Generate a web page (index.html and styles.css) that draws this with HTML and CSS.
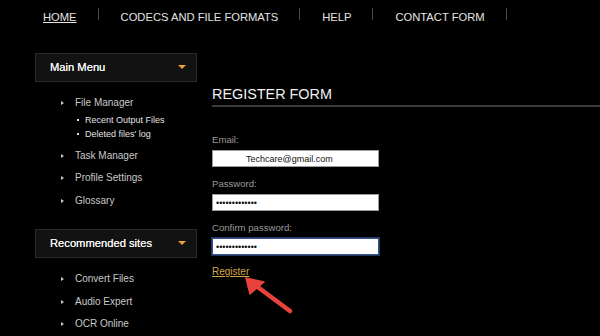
FILE: index.html
```html
<!DOCTYPE html>
<html>
<head>
<meta charset="utf-8">
<link rel="stylesheet" href="styles.css">
</head>
<body>
<header class="topnav">
  <ul class="nav-list">
    <li class="nav-item"><a class="nav-link active" href="#">HOME</a></li>
    <li class="nav-item"><a class="nav-link" href="#">CODECS AND FILE FORMATS</a></li>
    <li class="nav-item"><a class="nav-link" href="#">HELP</a></li>
    <li class="nav-item"><a class="nav-link" href="#">CONTACT FORM</a></li>
  </ul>
</header>
<div class="layout">
  <aside class="sidebar">
    <div class="panel-head"><span class="panel-title">Main Menu</span><span class="caret"></span></div>
    <ul class="menu">
      <li class="menu-item"><span class="menu-text">File Manager</span>
        <ul class="submenu">
          <li class="sub-item">Recent Output Files</li>
          <li class="sub-item">Deleted files' log</li>
        </ul>
      </li>
      <li class="menu-item"><span class="menu-text">Task Manager</span></li>
      <li class="menu-item"><span class="menu-text">Profile Settings</span></li>
      <li class="menu-item"><span class="menu-text">Glossary</span></li>
    </ul>
    <div class="panel-head"><span class="panel-title">Recommended sites</span><span class="caret"></span></div>
    <ul class="menu">
      <li class="menu-item"><span class="menu-text">Convert Files</span></li>
      <li class="menu-item"><span class="menu-text">Audio Expert</span></li>
      <li class="menu-item"><span class="menu-text">OCR Online</span></li>
    </ul>
  </aside>
  <main class="content">
    <h1 class="page-title">REGISTER FORM</h1>
    <form class="reg-form">
      <div class="field">
        <label class="field-label">Email:</label>
        <input class="field-input email-input" type="text" value="Techcare@gmail.com">
      </div>
      <div class="field">
        <label class="field-label">Password:</label>
        <input class="field-input pass-input" type="password" value="1234567890123">
      </div>
      <div class="field">
        <label class="field-label">Confirm password:</label>
        <input class="field-input pass-input focused" type="password" value="1234567890123">
      </div>
      <a class="register-link" href="#">Register</a>
    </form>
  </main>
</div>
<svg class="annot-arrow" width="600" height="336" viewBox="0 0 600 336">
  <line x1="290" y1="311" x2="255" y2="285" stroke="#e8423c" stroke-width="4.5" stroke-linecap="round"/>
  <polygon points="246,278 250,294 264,282" fill="#e8423c" stroke="#e8423c" stroke-width="1.5" stroke-linejoin="round"/>
</svg>
</body>
</html>
```
FILE: styles.css
```css
html, body {
  margin: 0;
  padding: 0;
  background: #000;
}
body {
  width: 600px;
  height: 336px;
  overflow: hidden;
  position: relative;
  font-family: "Liberation Sans", Arial, sans-serif;
  color: #ccc;
}
.topnav {
  height: 33px;
}
.nav-list {
  list-style: none;
  margin: 0;
  padding: 0 0 0 21px;
  display: flex;
}
.nav-item {
  display: flex;
  align-items: flex-start;
  height: 33px;
}
.nav-item::after {
  content: "";
  width: 1px;
  height: 12px;
  margin-top: 8px;
  background: #4a4a4a;
}
.nav-link {
  margin-top: 11px;
  padding: 0 21px 0 22px;
  line-height: 12px;
  font-size: 11.2px;
  color: #e4e4e4;
  text-decoration: none;
}
.nav-link.active {
  text-decoration: underline;
}
.layout {
  display: flex;
  padding-left: 35px;
}
.sidebar {
  width: 162px;
  margin-top: 20px;
}
.panel-head {
  box-sizing: border-box;
  height: 29px;
  background: #121212;
  border: 1px solid #2a2a2a;
  display: flex;
  align-items: center;
  justify-content: space-between;
  padding: 0 10px 0 14px;
}
.panel-title {
  font-size: 11.2px;
  font-weight: normal;
  color: #f4f4f4;
  line-height: 27px;
  text-shadow: 0 0 0.4px #fff;
}
.caret {
  width: 0;
  height: 0;
  border-left: 4px solid transparent;
  border-right: 4px solid transparent;
  border-top: 4px solid #f0a233;
  margin-top: -1px;
}
.menu {
  list-style: none;
  margin: 10px 0 16.6px;
  padding: 0 0 0 40px;
}
.menu-item {
  position: relative;
  line-height: 22.6px;
  font-size: 10px;
  color: #c8c8c8;
}
.menu-item::before {
  content: "";
  position: absolute;
  left: -14px;
  top: 9px;
  width: 0;
  height: 0;
  border-top: 2.5px solid transparent;
  border-bottom: 2.5px solid transparent;
  border-left: 3px solid #c8c8c8;
}
.submenu {
  list-style: none;
  margin: -2px 0 4px;
  padding: 0 0 0 10px;
}
.sub-item {
  position: relative;
  line-height: 14px;
  font-size: 9px;
  color: #e2e2e2;
}
.sub-item::before {
  content: "";
  position: absolute;
  left: -8px;
  top: 6px;
  width: 2px;
  height: 2px;
  background: #ddd;
}
.content {
  margin-left: 15px;
  flex: 1;
}
.page-title {
  margin: 52.3px 0 0;
  font-size: 14.4px;
  font-weight: normal;
  line-height: 18px;
  color: #f0f0f0;
  padding-bottom: 2px;
  border-bottom: 2px solid #3c3c3c;
}
.reg-form {
  margin-top: 26px;
  display: flex;
  flex-direction: column;
  align-items: flex-start;
}
.field {
  display: flex;
  flex-direction: column;
  margin-bottom: 10.5px;
}
.field-label {
  font-size: 9.6px;
  line-height: 14px;
  color: #9a9a9a;
}
.field-input {
  box-sizing: border-box;
  width: 167px;
  height: 16.5px;
  margin: 3px 0 0;
  border: 1px solid #9a9a9a;
  background: #fff;
  font-family: "Liberation Sans", Arial, sans-serif;
  font-size: 9px;
  color: #111;
  outline: none;
}
.email-input {
  padding: 0 0 0 33px;
}
.pass-input {
  padding: 0 0 0 3px;
}
.focused {
  border: 1px solid #35558a;
  box-shadow: 0 0 0 1px #22385e;
}
.register-link {
  margin-top: -0.5px;
  font-size: 10px;
  line-height: 14px;
  color: #d3a64a;
  text-decoration: underline;
}
.annot-arrow {
  position: absolute;
  left: 0;
  top: 0;
  pointer-events: none;
}
```
